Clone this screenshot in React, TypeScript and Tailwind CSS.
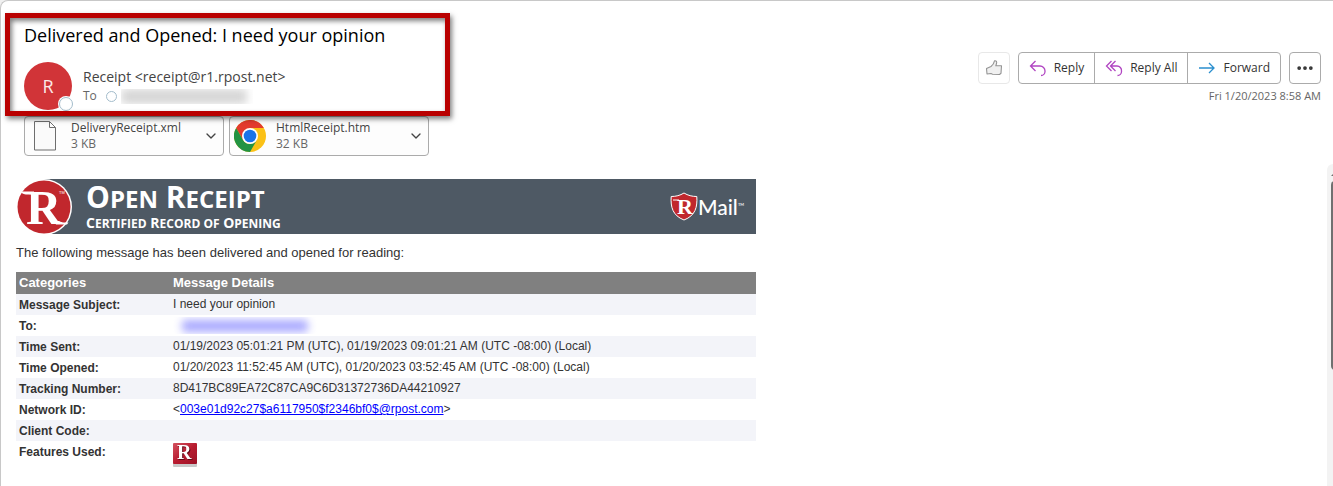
import { ChevronDown, Ellipsis } from "lucide-react";
import type { ReactNode } from "react";

const ReplyIcon = () => (
  <svg viewBox="0 0 18 18" className="size-[18px] fill-none stroke-[#b146c2]" aria-hidden="true">
    <path d="M6.5 2 1.500 7l5 5M1.500 7H11a5 5 0 0 1 5 5v.5a4 4 0 0 1-4 4" strokeWidth="1.3" />
  </svg>
);

const ReplyAllIcon = () => (
  <svg viewBox="0 0 18 18" className="size-[18px] fill-none stroke-[#b146c2]" aria-hidden="true">
    <path d="M6.500 2l-5 5 5 5M10.500 2l-5 5 5 5M5.500 7H12a4.500 4.500 0 0 1 4.500 5v.5a4 4 0 0 1-4 4" strokeWidth="1.3" />
  </svg>
);

const ForwardIcon = () => (
  <svg viewBox="0 0 18 18" className="size-[18px] fill-none stroke-[#2b8fce]" aria-hidden="true">
    <path d="M1 9h15M11 4l5 5-5 5" strokeWidth="1.3" />
  </svg>
);

const ThumbIcon = () => (
  <svg viewBox="0 0 18 18" className="size-[18px] fill-[#f0f0f0] stroke-[#949494]" aria-hidden="true">
    <path
      d="M1.500 9.500 6 7.500C8 6 9 4 9.500 1.800c1.800-.3 2.600 1 2 2.700l-.7 2.300h5.700l-.5 7.500-1.500 1.200-7-.3-1.500-.7-4 .5z"
      strokeWidth="1.1"
      strokeLinejoin="round"
    />
  </svg>
);

const FileIcon = () => (
  <svg viewBox="0 0 24 32" className="h-8 w-6 fill-[#fafafa] stroke-[#6e6e6e]" aria-hidden="true">
    <path d="M1.500 1.500h15l6 6v22.500h-21zM16.500 1.500v6h6" />
  </svg>
);

const ChromeIcon = () => (
  <svg viewBox="0 0 48 48" className="size-8" aria-hidden="true">
    <circle cx="24" cy="24" r="24" fill="#fbc116" />
    <path d="M24 12h20.800A24 24 0 0 0 3.200 12l10.400 18z" fill="#e33b2e" />
    <path d="M34.400 30 24 48A24 24 0 0 1 3.200 12l10.400 18A12 12 0 0 0 34.400 30z" fill="#229342" />
    <circle cx="24" cy="24" r="12" fill="#fff" />
    <circle cx="24" cy="24" r="9.500" fill="#1a73e8" />
  </svg>
);

const RPostLogo = () => (
  <svg viewBox="0 0 56 55" className="h-[55px] w-14 shrink-0" aria-hidden="true">
    <path d="M28 0h28v55H28z" fill="#4e5964" />
    <circle cx="28" cy="28" r="28" fill="#fff" />
    <circle cx="28" cy="28" r="26.500" fill="#c1272d" />
    <path d="M4 12.500h14v3H12c-3 0-6-.5-8-3zM38 42h5c3 2 6 1.500 9.500 1.500l-1.500 2H40z" fill="#fff" />
    <text x="10" y="45" fontSize="49" fontWeight="700" fontFamily="Liberation Serif, serif" fill="#fff">
      R
    </text>
    <text x="43" y="15" fontSize="4" fontFamily="Liberation Sans, sans-serif" fill="#fff">
      TM
    </text>
  </svg>
);

const RMailShield = () => (
  <svg viewBox="0 0 28 29" className="h-[29px] w-7" aria-hidden="true">
    <path
      d="M14 1c4 2.500 8 3.500 12.800 3.500C27.500 15 25.500 23.500 14 28 2.500 23.500.5 15 1.200 4.500 6 4.500 10 3.500 14 1z"
      fill="#c1272d"
      stroke="#fff"
    />
    <text x="7" y="22" fontSize="22" fontWeight="700" fontFamily="Liberation Serif, serif" fill="#fff">
      R
    </text>
    <path d="M3 8h6" stroke="#fff" />
  </svg>
);

const FeatureIcon = () => (
  <svg viewBox="0 0 24 25" className="h-[25px] w-6" role="img" aria-label="Registered">
    <defs>
      <linearGradient id="feature" x1="0" y1="0" x2="1" y2="1">
        <stop offset="0" stopColor="#d4525f" />
        <stop offset=".5" stopColor="#b81c30" />
        <stop offset="1" stopColor="#9c1226" />
      </linearGradient>
    </defs>
    <rect y="2" width="24" height="22" rx="1" fill="#c9c9c9" />
    <rect width="24" height="21" rx="1" fill="url(#feature)" />
    <text
      x="4"
      y="16"
      fontSize="20"
      fontWeight="700"
      fontFamily="Liberation Serif, serif"
      fill="#fff"
      className="drop-shadow-[1px_1px_0_#5f0a18]"
    >
      R
    </text>
  </svg>
);

interface AttachmentProps {
  name: string;
  size: string;
  icon: ReactNode;
}

const Attachment = ({ name, size, icon }: AttachmentProps) => (
  <button className="flex h-10 w-[200px] items-center rounded border border-[#ababab] bg-[#fdfdfd] pl-1 pr-1 text-left">
    <span className="flex w-8 justify-center">{icon}</span>
    <span className="ml-[10px] flex-1 text-[12px] leading-4">
      <span className="block text-[#444]">{name}</span>
      <span className="block text-[#666]">{size}</span>
    </span>
    <ChevronDown size={16} className="text-[#444]" />
  </button>
);

interface RowProps {
  label: string;
  children?: ReactNode;
}

const Row = ({ label, children }: RowProps) => (
  <tr className="h-[21px] align-top odd:bg-[#f3f4f9]">
    <th scope="row" className="w-[154px] pl-[3px] pt-[3px] text-left text-[12px] leading-4 font-bold">
      {label}
    </th>
    <td className="pl-[3px] pt-[2px] text-[12px] leading-4">{children}</td>
  </tr>
);

const actionClass = "flex h-full items-center gap-[7px] px-[10px]";

const App = () => {
  return (
    <div className="min-h-screen bg-[#f0f0f0] font-['Open_Sans','Noto_Sans',sans-serif]">
      <main className="flex min-h-screen flex-col rounded-tl-lg border-t border-l border-[#c8c8c8] bg-white">
        <header className="relative flex justify-between pl-[23px] pr-3">
          <div className="pt-5">
            <h1 className="text-[18px] leading-7 text-black">Delivered and Opened: I need your opinion</h1>
            <div className="mt-[13px] flex h-12">
              <div className="relative flex size-12 items-center justify-center rounded-full bg-[#d13438] text-[18px] text-[#fbe9e9]">
                R
                <span className="absolute -right-px -bottom-px size-[14px] rounded-full border border-[#a3bccb] bg-white ring-1 ring-white" />
              </div>
              <div className="ml-[11px] pt-[5px]">
                <p className="text-[14px] leading-5 text-[#444]">Receipt &lt;receipt@r1.rpost.net&gt;</p>
                <p className="flex items-center text-[12px] leading-[18px] text-[#666]">
                  To
                  <span className="mr-1 ml-[9px] size-[11px] rounded-full border border-[#a3bccb]" />
                  <span className="h-[15px] w-[132px] overflow-hidden">
                    <span className="block h-full w-[126px] rounded bg-[#d6d6d6] blur-[4px]" />
                  </span>
                </p>
              </div>
            </div>
            <div className="mt-[6px] flex gap-[5px]">
              <Attachment name="DeliveryReceipt.xml" size="3 KB" icon={<FileIcon />} />
              <Attachment name="HtmlReceipt.htm" size="32 KB" icon={<ChromeIcon />} />
            </div>
          </div>
          <div className="flex flex-col items-end pt-[51px] text-[12px]">
            <div className="flex h-8 gap-2 text-[#333]">
              <button aria-label="Like" className="flex w-8 items-center justify-center rounded border border-[#e8e8e8]">
                <ThumbIcon />
              </button>
              <div className="flex divide-x divide-[#ababab] rounded border border-[#ababab]">
                <button className={actionClass}>
                  <ReplyIcon />
                  Reply
                </button>
                <button className={actionClass}>
                  <ReplyAllIcon />
                  Reply All
                </button>
                <button className={actionClass}>
                  <ForwardIcon />
                  Forward
                </button>
              </div>
              <button aria-label="More actions" className="flex w-8 items-center justify-center rounded border border-[#ababab]">
                <Ellipsis size={20} strokeWidth={2.5} />
              </button>
            </div>
            <time dateTime="2023-01-20T08:58" className="mt-1 text-[11px] leading-4 text-[#666]">
              Fri 1/20/2023 8:58 AM
            </time>
          </div>
          <div className="pointer-events-none absolute top-3 left-1 h-[103px] w-[445px] border-5 border-[#b90000] shadow-[2px_3px_5px_rgba(0,0,0,0.5),inset_2px_3px_5px_rgba(0,0,0,0.5)]" />
        </header>

        <div className="mt-2 flex flex-1">
          <article className="flex-1 pt-[15px] pl-[15px] font-['Liberation_Sans',Arial,sans-serif] text-[#333]">
            <div className="max-w-[740px]">
              <div className="flex">
                <RPostLogo />
                <div className="flex flex-1 items-center justify-between bg-[#4e5964] pr-3 pl-[14px] font-['Open_Sans',sans-serif] text-white">
                  <div>
                    <p className="text-[30px] leading-8 font-bold">
                      O<span className="text-[24px]">PEN</span> R<span className="text-[24px]">ECEIPT</span>
                    </p>
                    <p className="text-[14px] leading-4 font-bold">
                      C<span className="text-[12px]">ERTIFIED</span> R<span className="text-[12px]">ECORD OF</span> O
                      <span className="text-[12px]">PENING</span>
                    </p>
                  </div>
                  <div className="flex items-center font-['Lato',sans-serif] text-[21px] leading-7 font-medium">
                    <RMailShield />
                    Mail
                    <sup className="text-[4px]">TM</sup>
                  </div>
                </div>
              </div>
              <p className="mt-[10px] mb-[10px] text-[13px] leading-[18px]">
                The following message has been delivered and opened for reading:
              </p>
              <table className="w-full border-collapse">
                <thead>
                  <tr className="h-[22px] bg-[#808080] text-left text-[13px] leading-4 text-white">
                    <th scope="col" className="pl-[3px]">Categories</th>
                    <th scope="col" className="pl-[3px]">Message Details</th>
                  </tr>
                </thead>
                <tbody>
                  <Row label="Message Subject:">I need your opinion</Row>
                  <Row label="To:">
                    <span className="block h-[17px] w-36 overflow-hidden pt-[3px]">
                      <span className="mx-auto block h-3 w-[126px] rounded bg-[#a9a9ff] blur-[4px]" />
                    </span>
                  </Row>
                  <Row label="Time Sent:">01/19/2023 05:01:21 PM (UTC), 01/19/2023 09:01:21 AM (UTC -08:00) (Local)</Row>
                  <Row label="Time Opened:">01/20/2023 11:52:45 AM (UTC), 01/20/2023 03:52:45 AM (UTC -08:00) (Local)</Row>
                  <Row label="Tracking Number:">8D417BC89EA72C87CA9C6D31372736DA44210927</Row>
                  <Row label="Network ID:">
                    &lt;
                    <a href="mailto:003e01d92c27$a6117950$f2346bf0$@rpost.com" className="text-[#0000ff] underline">
                      003e01d92c27$a6117950$f2346bf0$@rpost.com
                    </a>
                    &gt;
                  </Row>
                  <Row label="Client Code:" />
                  <Row label="Features Used:">
                    <FeatureIcon />
                  </Row>
                </tbody>
              </table>
            </div>
          </article>
          <div className="w-[6px] overflow-hidden rounded-tl-md bg-[#f3f3f3] pt-2 pl-1">
            <svg viewBox="0 0 8 4" className="h-1 w-2 fill-[#707070]" aria-hidden="true">
              <path d="M4 0 8 4H0z" />
            </svg>
            <div className="mt-[5px] h-[189px] w-2 rounded bg-[#707070]" />
          </div>
        </div>
      </main>
    </div>
  );
};

export default App;
